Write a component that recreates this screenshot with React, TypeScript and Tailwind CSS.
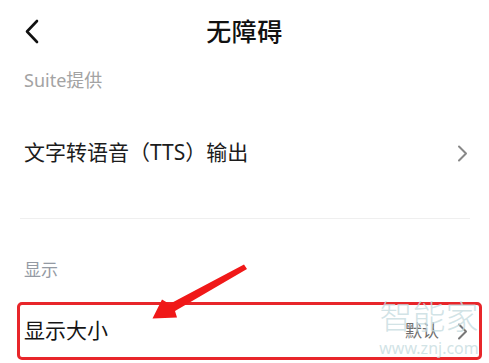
import React from 'react'

const FONT = "font-['Noto_Sans','Noto_Sans_CJK_SC',sans-serif]"

function ChevronRight({ className = '' }: { className?: string }) {
  return (
    <svg width="11" height="17" viewBox="0 0 11 17" fill="none" className={className}>
      <path d="M2 1.5 L9 8.5 L2 15.5" stroke="currentColor" strokeWidth="2" strokeLinecap="round" strokeLinejoin="round" />
    </svg>
  )
}

export default function App() {
  return (
    <div className={`relative w-[489px] h-[363px] overflow-hidden bg-white ${FONT}`}>

      {/* ── Header ─────────────────────────────────── */}
      <header className="relative flex items-center justify-center h-[62px]">
        <button className="absolute left-[24px] top-[19px] text-[#111]">
          <svg width="16" height="25" viewBox="0 0 16 25" fill="none">
            <path d="M13 2 L3 12.5 L13 23" stroke="currentColor" strokeWidth="2.6" strokeLinecap="round" strokeLinejoin="round" />
          </svg>
        </button>
        <h1 className="text-[25px] leading-none font-medium text-[#111] tracking-[0.5px]">无障碍</h1>
      </header>

      {/* ── Suite section ──────────────────────────── */}
      <div className="flex items-center h-[36px] pl-6 text-[18px] text-[#a3a3a3]">Suite提供</div>

      <div className="flex items-center justify-between h-[110px] pl-6 pr-[21px]">
        <span className="text-[21px] text-[#1c1c1c]">文字转语音（TTS）输出</span>
        <ChevronRight className="text-[#888]" />
      </div>

      <div className="mt-[10px] ml-5 mr-[19px] h-px bg-[#efefef]" />

      {/* ── Display section ────────────────────────── */}
      <div className="pt-[40px] pl-6 text-[17px] leading-[22px] text-[#949aa3]">显示</div>

      <div className="mt-[21px] ml-[17px] mr-[7px] h-[58px] border-[3px] border-[#e8262a] rounded-[5px] flex items-center justify-between pl-[4px] pr-[11px]">
        <span className="text-[21px] text-[#151515]">显示大小</span>
        <div className="flex items-center gap-[18px]">
          <span className="text-[17px] text-[#6f6f6f]">默认</span>
          <ChevronRight className="text-[#777]" />
        </div>
      </div>

      {/* ── Watermark ──────────────────────────────── */}
      <div className="pointer-events-none absolute left-[374px] top-[296px] w-[110px] flex flex-col items-center whitespace-nowrap text-[#c6dce0]/80">
        <span className="text-[33px] leading-[42px] font-light">智能家</span>
        <span className="text-[16px] leading-[18px] mt-[1px]">www.znj.com</span>
      </div>

      {/* ── Annotation arrow ───────────────────────── */}
      <svg className="pointer-events-none absolute left-[140px] top-[255px]" width="110" height="70" viewBox="140 255 110 70">
        <polygon points="244,264.5 247,269 175,311 177,317.5 152.5,318.5 162,299.5 169.5,304" fill="#f01818" />
      </svg>
    </div>
  )
}
